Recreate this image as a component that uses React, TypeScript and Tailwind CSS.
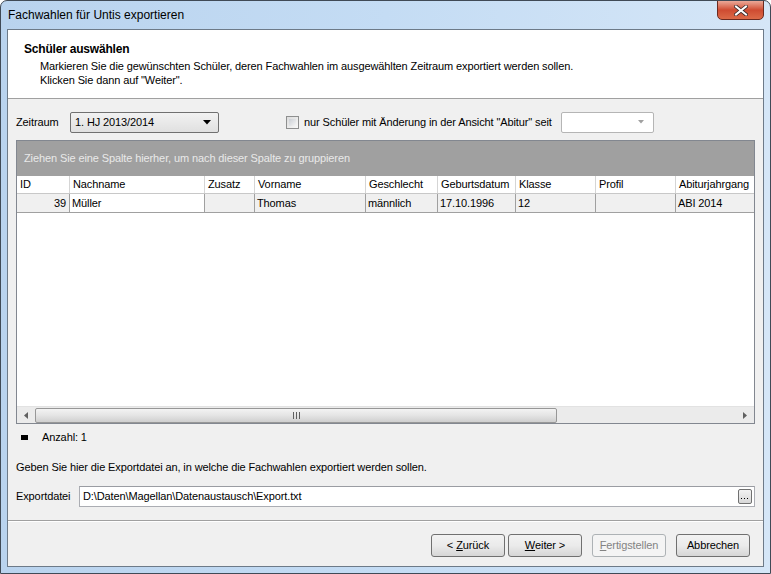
import React from "react";

const cols = [
  { name: "ID", w: 53 },
  { name: "Nachname", w: 135 },
  { name: "Zusatz", w: 50 },
  { name: "Vorname", w: 111 },
  { name: "Geschlecht", w: 72 },
  { name: "Geburtsdatum", w: 78 },
  { name: "Klasse", w: 80 },
  { name: "Profil", w: 80 },
  { name: "Abiturjahrgang", w: 78 },
];

const row = ["39", "Müller", "", "Thomas", "männlich", "17.10.1996", "12", "", "ABI 2014"];

function Btn({ children, disabled }: { children: React.ReactNode; disabled?: boolean }) {
  return (
    <div
      className={
        "w-[74px] h-[23px] flex items-center justify-center rounded-[3px] border text-[11px] " +
        (disabled
          ? "border-[#adb2b5] bg-[#f4f4f4] text-[#838383]"
          : "border-[#707070] bg-gradient-to-b from-[#f2f2f2] via-[#ebebeb] to-[#d6d6d6] text-black")
      }
    >
      {children}
    </div>
  );
}

export default function App() {
  return (
    <div
      className="relative w-[771px] h-[574px] overflow-hidden rounded-t-[7px] border border-[#404a56] bg-gradient-to-r from-[#b9d3ee] via-[#c4dcf4] to-[#d5e6f7] flex flex-col"
      style={{ fontFamily: '"Liberation Sans", Arial, sans-serif' }}
    >
      {/* title bar */}
      <div className="h-[28px] flex items-start justify-between shrink-0">
        <div className="pl-[7px] pt-[7px] text-[12px] leading-[14px] text-black">
          Fachwahlen für Untis exportieren
        </div>
        <div className="mr-[6px] -mt-px w-[47px] h-[20px] rounded-b-[5px] border border-[#6b2a20] bg-gradient-to-b from-[#eaa898] via-[#cf4b31] to-[#dc6a48] flex items-center justify-center">
          <svg width="14" height="11" viewBox="0 0 14 11">
            <path d="M2 1.5 L12 9.5 M12 1.5 L2 9.5" stroke="#3a2a2a" strokeWidth="3.6" strokeLinecap="square" />
            <path d="M2 1.5 L12 9.5 M12 1.5 L2 9.5" stroke="#ffffff" strokeWidth="2" strokeLinecap="square" />
          </svg>
        </div>
      </div>

      {/* client area */}
      <div className="mx-[6px] mb-[6px] flex-1 border border-[#6d7a88] bg-[#f0f0f0] flex flex-col text-[11px] tracking-[-0.11px] text-black">
        {/* header */}
        <div className="h-[69px] bg-white border-b border-[#a0a0a0] shrink-0 pl-[16px] pt-[12px]">
          <div className="font-bold text-[12px] leading-[14px] tracking-[-0.2px]">Schüler auswählen</div>
          <div className="pl-[16px] pt-[3px] leading-[14px]">
            Markieren Sie die gewünschten Schüler, deren Fachwahlen im ausgewählten Zeitraum exportiert werden sollen.
          </div>
          <div className="pl-[16px] leading-[14px]">Klicken Sie dann auf "Weiter".</div>
        </div>

        <div className="px-[8px] flex flex-col">
          {/* zeitraum row */}
          <div className="mt-[13px] h-[21px] flex items-center">
            <span className="w-[54px]">Zeitraum</span>
            <div className="w-[149px] h-[21px] rounded-[2px] border border-[#707070] bg-gradient-to-b from-[#f2f2f2] to-[#e0e0e0] flex items-center justify-between pl-[4px] pr-[7px]">
              <span>1. HJ 2013/2014</span>
              <svg width="8" height="5" viewBox="0 0 8 5">
                <path d="M0 0 H8 L4 4.5 Z" fill="#000" />
              </svg>
            </div>
            <div className="ml-[67px] w-[13px] h-[13px] border border-[#8e8f8f] bg-gradient-to-br from-[#dcdcdc] to-[#f8f8f8] p-[2px]">
              <div className="w-full h-full bg-gradient-to-br from-[#cbcfd5] to-[#f5f5f5]" />
            </div>
            <span className="ml-[5px]">nur Schüler mit Änderung in der Ansicht "Abitur" seit</span>
            <div className="ml-auto mr-[101px] w-[93px] h-[21px] rounded-[2px] border border-[#b5b5b5] bg-white flex items-center justify-end pr-[8px]">
              <svg width="8" height="5" viewBox="0 0 8 5">
                <path d="M1 0 H7 L4 3.5 Z" fill="#a0a0a0" />
              </svg>
            </div>
          </div>

          {/* grid */}
          <div className="mt-[7px] h-[284px] border border-[#828790] bg-white flex flex-col">
            <div className="h-[35px] bg-[#a0a0a0] flex items-center pl-[7px] text-[#e9e9e9] shrink-0">
              Ziehen Sie eine Spalte hierher, um nach dieser Spalte zu gruppieren
            </div>
            <div className="h-[18px] flex border-b border-[#c8c8c8] shrink-0">
              {cols.map((c, i) => (
                <div
                  key={c.name}
                  className={"h-full flex items-center pl-[3px] whitespace-nowrap overflow-hidden " + (i < cols.length - 1 ? "border-r border-[#d5d5d5]" : "")}
                  style={{ width: c.w }}
                >
                  {c.name}
                </div>
              ))}
            </div>
            <div className="h-[19px] flex border-b border-[#a0a0a0] bg-[#f0f0f0] shrink-0">
              {cols.map((c, i) => (
                <div
                  key={c.name}
                  className={
                    "h-full flex items-center whitespace-nowrap overflow-hidden " +
                    (i === 0 ? "justify-end pr-[3px] " : "pl-[2px] ") +
                    (i === 1 ? "bg-white " : "") +
                    (i < cols.length - 1 ? "border-r border-[#a0a0a0]" : "")
                  }
                  style={{ width: c.w }}
                >
                  {row[i]}
                </div>
              ))}
            </div>
            <div className="flex-1" />
            {/* horizontal scrollbar */}
            <div className="h-[17px] bg-[#ebebeb] border-t border-[#e2e2e2] flex items-center shrink-0">
              <div className="w-[18px] h-full flex items-center justify-center">
                <svg width="4" height="7" viewBox="0 0 4 7">
                  <path d="M4 0 V7 L0 3.5 Z" fill="#606060" />
                </svg>
              </div>
              <div className="w-[522px] h-[15px] rounded-[2px] border border-[#979797] bg-gradient-to-b from-[#f3f3f3] via-[#e4e4e4] to-[#cfcfcf] flex items-center justify-center">
                <div className="flex gap-[2px]">
                  <div className="w-px h-[7px] bg-[#606060]" />
                  <div className="w-px h-[7px] bg-[#606060]" />
                  <div className="w-px h-[7px] bg-[#606060]" />
                </div>
              </div>
              <div className="flex-1" />
              <div className="w-[18px] h-full flex items-center justify-center">
                <svg width="4" height="7" viewBox="0 0 4 7">
                  <path d="M0 0 V7 L4 3.5 Z" fill="#606060" />
                </svg>
              </div>
            </div>
          </div>

          {/* Anzahl */}
          <div className="mt-[6px] h-[14px] flex items-center">
            <div className="ml-[5px] w-[7px] h-[5px] bg-black" />
            <span className="ml-[14px]">Anzahl: 1</span>
          </div>

          <div className="mt-[16px] h-[14px] flex items-center">
            Geben Sie hier die Exportdatei an, in welche die Fachwahlen exportiert werden sollen.
          </div>

          <div className="mt-[12px] h-[21px] flex items-center">
            <span className="w-[63px]">Exportdatei</span>
            <div className="flex-1 h-[21px] border border-[#abadb3] border-t-[#9a9ca2] bg-white flex items-center justify-between pl-[3px] pr-[2px]">
              <span>D:\Daten\Magellan\Datenaustausch\Export.txt</span>
              <div className="w-[14px] h-[15px] rounded-[2px] border border-[#707070] bg-gradient-to-b from-[#f2f2f2] to-[#d8d8d8] flex items-end justify-center pb-[3px]">
                <svg width="8" height="2" viewBox="0 0 8 2">
                  <rect x="0" y="0" width="1" height="1" fill="#000" />
                  <rect x="3" y="0" width="1" height="1" fill="#000" />
                  <rect x="6" y="0" width="1" height="1" fill="#000" />
                </svg>
              </div>
            </div>
          </div>
        </div>

        {/* separator */}
        <div className="mt-[13px] border-t border-[#a0a0a0] border-b-white border-b" />

        {/* buttons */}
        <div className="mt-[12px] flex justify-end pr-[13px] gap-0">
          <Btn>
            &lt; <span className="underline ml-[3px]">Z</span>urück
          </Btn>
          <div className="w-[3px]" />
          <Btn>
            <span className="underline">W</span>eiter &gt;
          </Btn>
          <div className="w-[10px]" />
          <Btn disabled>
            <span className="underline">F</span>ertigstellen
          </Btn>
          <div className="w-[10px]" />
          <Btn>Abbrechen</Btn>
        </div>
      </div>
    </div>
  );
}
